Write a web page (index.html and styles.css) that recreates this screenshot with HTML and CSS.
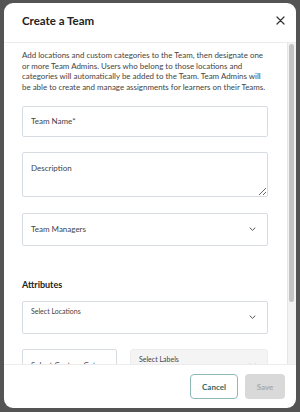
FILE: index.html
```html
<!DOCTYPE html>
<html lang="en">
<head>
  <meta charset="UTF-8">
  <meta name="viewport" content="width=device-width, initial-scale=1.0">
  <title>Create a Team</title>
  <link rel="stylesheet" href="styles.css">
</head>
<body>
  <div class="overlay">
    <div class="modal">
      <header class="modal-header">
        <h2>Create a Team</h2>
        <button class="close-btn" aria-label="Close">
          <svg width="9" height="9" viewBox="0 0 9 9"><path d="M1 1L8 8M8 1L1 8" stroke="#333" stroke-width="1.2" stroke-linecap="round"/></svg>
        </button>
      </header>

      <div class="modal-body">
        <div class="body-content">
          <p class="intro">Add locations and custom categories to the Team, then designate one or more Team Admins. Users who belong to those locations and categories will automatically be added to the Team. Team Admins will be able to create and manage assignments for learners on their Teams.</p>

          <input type="text" class="field" placeholder="Team Name*">
          <textarea class="field field-area" placeholder="Description"></textarea>

          <div class="field select">
            <span>Team Managers</span>
            <svg class="chevron" width="7" height="4" viewBox="0 0 7 4"><path d="M0.7 0.6L3.5 3.3L6.3 0.6" fill="none" stroke="#555" stroke-width="1"/></svg>
          </div>

          <h3 class="section-title">Attributes</h3>

          <div class="field select select-labelled">
            <span class="small-label">Select Locations</span>
            <svg class="chevron" width="7" height="4" viewBox="0 0 7 4"><path d="M0.7 0.6L3.5 3.3L6.3 0.6" fill="none" stroke="#555" stroke-width="1"/></svg>
          </div>

          <div class="attr-row">
            <div class="field select">
              <span class="clip">Select Custom Category</span>
            </div>
            <div class="field select select-labelled disabled">
              <span class="small-label">Select Labels</span>
              <svg class="chevron" width="7" height="4" viewBox="0 0 7 4"><path d="M0.7 0.6L3.5 3.3L6.3 0.6" fill="none" stroke="#aaa" stroke-width="1"/></svg>
            </div>
          </div>
        </div>
        
        <div class="scroll-track"><div class="scroll-thumb"></div></div>
      </div>

      <footer class="modal-footer">
        <button class="btn btn-outline">Cancel</button>
        <button class="btn btn-disabled" disabled>Save</button>
      </footer>
    </div>
  </div>
</body>
</html>
```

FILE: styles.css
```css
body {
  margin: 0;
  font-family: Lato, 'Open Sans', sans-serif;
  color: #333;
}
.overlay {
  width: 300px;
  height: 412px;
  box-sizing: border-box;
  padding: 3px 4px 4px 4px;
  background: #545454;
}
.modal {
  height: 100%;
  background: #fff;
  border-radius: 9px;
  display: flex;
  flex-direction: column;
  overflow: hidden;
}
.modal-header {
  height: 40px;
  flex-shrink: 0;
  display: flex;
  align-items: center;
  justify-content: space-between;
  padding: 0 10px 4px 18px;
  box-sizing: border-box;
  border-bottom: 1px solid #ececec;
}
.modal-header h2 {
  margin: 0;
  font-size: 11.5px;
  font-weight: 700;
  color: #222;
}
.close-btn {
  border: none;
  background: none;
  padding: 0;
  width: 12px;
  height: 12px;
  display: flex;
  align-items: center;
  justify-content: center;
  cursor: pointer;
}
.modal-body {
  flex: 1;
  min-height: 0;
  display: flex;
}
.body-content {
  flex: 1;
  min-width: 0;
  overflow: hidden;
  padding: 7px 19px 40px 18px;
}
.scroll-track {
  width: 9px;
  box-sizing: border-box;
  flex-shrink: 0;
  background: #f3f3f3;
  border-left: 1px solid #e6e6e6;
  padding: 1px 2px 0 1px;
}
.scroll-thumb {
  height: 258px;
  background: #c4c4c4;
  border-radius: 3px;
}
.intro {
  margin: 0 0 13px 0;
  font-size: 7.95px;
  line-height: 10.67px;
  color: #444;
}
.field {
  display: block;
  width: 100%;
  box-sizing: border-box;
  border: 1px solid #d6dce2;
  border-radius: 2px;
  background: #fff;
  font-family: inherit;
  font-size: 8px;
  color: #444;
  padding: 0 8px;
  margin: 0 0 15px 0;
}
input.field {
  height: 31px;
}
.field::placeholder {
  color: #444;
  opacity: 1;
}
.field-area {
  height: 45px;
  padding-top: 10px;
  resize: vertical;
  margin-bottom: 16px;
}
.select {
  height: 33px;
  display: flex;
  align-items: center;
  justify-content: space-between;
  padding: 0 11px 0 8px;
}
.select-labelled {
  position: relative;
}
.select-labelled .small-label {
  position: absolute;
  left: 8px;
  top: 5px;
  font-size: 7px;
}
.select-labelled .chevron {
  margin-left: auto;
}
.section-title {
  margin: 33px 0 10px 0;
  font-size: 9px;
  font-weight: 700;
  color: #222;
  line-height: 12px;
}
.attr-row {
  display: grid;
  grid-template-columns: 95px 1fr;
  gap: 13px;
}
.attr-row .field {
  margin-bottom: 0;
}
.clip {
  white-space: nowrap;
  overflow: hidden;
}
.disabled {
  background: #f4f4f4;
  border-color: #ececec;
  border-radius: 3px;
}
.modal-footer {
  height: 44px;
  flex-shrink: 0;
  border-top: 1px solid #ececec;
  box-sizing: border-box;
  display: flex;
  justify-content: flex-end;
  align-items: center;
  gap: 7px;
  padding: 0 11px 0 0;
}
.btn {
  height: 25px;
  border-radius: 4px;
  font-family: inherit;
  font-size: 8px;
  font-weight: 700;
  cursor: pointer;
}
.btn-outline {
  width: 48px;
  background: #fff;
  border: 1px solid #8dbab6;
  color: #2e6a65;
}
.btn-disabled {
  width: 40px;
  background: #d9d9d9;
  border: none;
  color: #a9a9a9;
}
```
